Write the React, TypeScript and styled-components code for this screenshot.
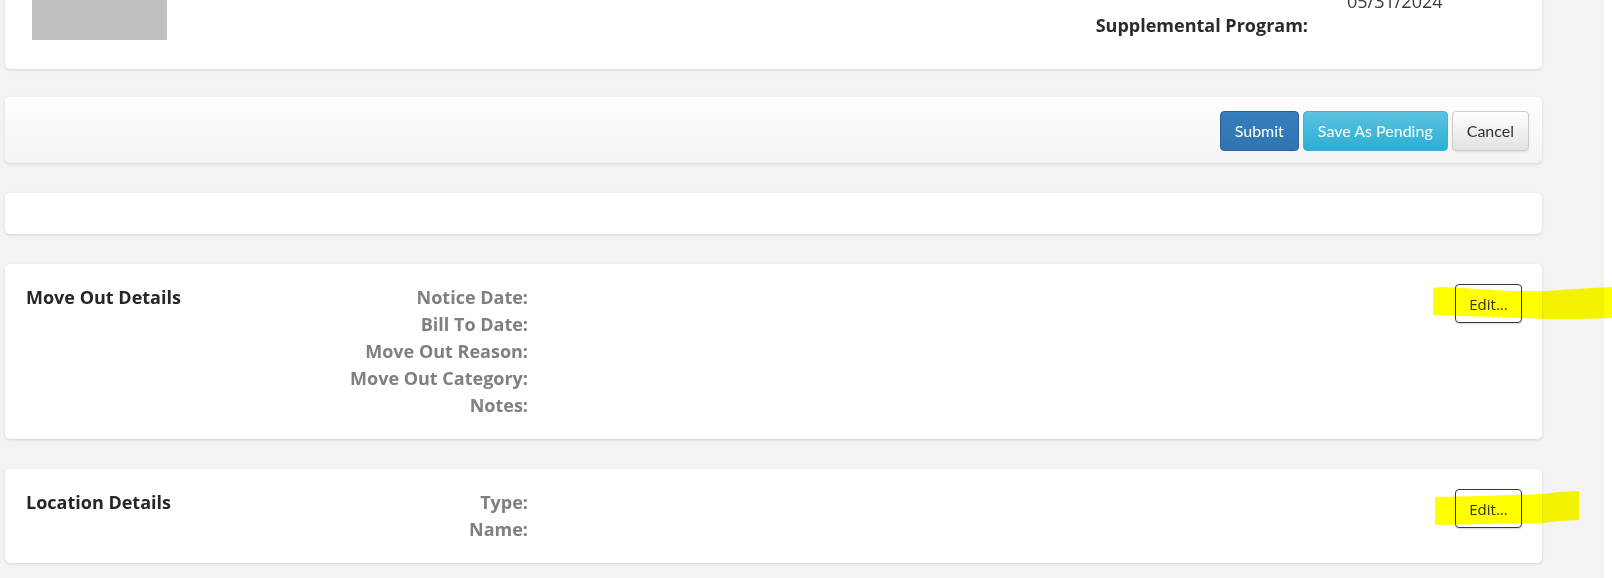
import React from "react";
import styled, { createGlobalStyle } from "styled-components";

const GlobalStyle = createGlobalStyle`
  html, body {
    margin: 0;
    padding: 0;
    background: #f3f3f3;
    overflow: hidden;
  }
  * { box-sizing: border-box; }
`;

const Shell = styled.div`
  position: relative;
  display: flex;
  align-items: flex-start;
  width: 1612px;
  height: 578px;
  overflow: hidden;
  font-family: "Open Sans", "Noto Sans", Arial, sans-serif;
`;

const Main = styled.main`
  flex: 1;
  display: flex;
  flex-direction: column;
  padding: 0 62px 0 5px;
  margin-top: -86px;
`;

const ScrollTrack = styled.div`
  width: 8px;
  height: 578px;
  flex-shrink: 0;
  background: #ffffff;
`;

const Card = styled.section<{ $after?: number }>`
  flex-shrink: 0;
  background: #ffffff;
  border-radius: 5px;
  box-shadow: 0 1px 3px rgba(0, 0, 0, 0.13);
  margin-bottom: ${(p) => (p.$after ?? 30)}px;
`;

const HeaderCard = styled(Card)`
  display: flex;
  align-items: flex-end;
  padding: 16px 0 29px 27px;
`;

const Placeholder = styled.div`
  width: 135px;
  height: 110px;
  background: #bfbfbf;
`;

const InfoGrid = styled.div`
  margin-left: auto;
  margin-right: 75px;
  margin-bottom: 3px;
  display: grid;
  grid-template-columns: 220px 120px;
  column-gap: 39px;
  line-height: 24px;
  font-size: 18px;
`;

const InfoLabel = styled.div`
  text-align: right;
  font-weight: 700;
  color: #2b2b2b;
`;

const InfoValue = styled.div`
  color: #333a44;
`;

const ActionBar = styled(Card)`
  height: 66px;
  display: flex;
  align-items: center;
  justify-content: flex-end;
  gap: 4px;
  padding: 1px 13px 0 0;
  background: linear-gradient(#ffffff, #f4f4f4);
`;

const Button = styled.button<{ $variant: "primary" | "info" | "default" }>`
  height: 40px;
  padding: 0 14px;
  border-radius: 4px;
  font-family: Lato, "Open Sans", sans-serif;
  font-size: 16px;
  cursor: pointer;
  border: 1px solid
    ${(p) =>
      p.$variant === "primary" ? "#2a6295" : p.$variant === "info" ? "#3db1d6" : "#cccccc"};
  color: ${(p) => (p.$variant === "default" ? "#333333" : "#ffffff")};
  background: ${(p) =>
    p.$variant === "primary"
      ? "linear-gradient(#357dbb, #3075b1)"
      : p.$variant === "info"
      ? "linear-gradient(#5bc2e0, #2daed6)"
      : "linear-gradient(#ffffff, #e2e2e2)"};
  box-shadow: ${(p) => (p.$variant === "default" ? "0 1px 2px rgba(0,0,0,0.1)" : "none")};
`;

const EmptyCard = styled(Card)`
  height: 41px;
`;

const DetailCard = styled(Card)`
  display: grid;
  grid-template-columns: 298px 204px 1fr 67px;
  padding: 20px 20px 20px 21px;
  font-size: 18px;
  line-height: 27px;
`;

const SectionTitle = styled.h3`
  margin: 0;
  font-size: 18px;
  font-weight: 700;
  color: #262626;
  line-height: 27px;
`;

const FieldLabels = styled.div`
  display: flex;
  flex-direction: column;
  align-items: flex-end;
  font-weight: 700;
  color: #808080;
  white-space: nowrap;
`;

const EditButton = styled.button`
  width: 67px;
  height: 39px;
  align-self: start;
  background: #ffffff;
  border: 1px solid #2c3b4b;
  border-radius: 4px;
  font-family: "Open Sans", "Noto Sans", sans-serif;
  font-size: 15px;
  color: #333333;
  box-shadow: 0 1px 2px rgba(0, 0, 0, 0.15);
  padding: 0;
  cursor: pointer;
`;

const Highlights = styled.svg`
  position: absolute;
  left: 0;
  top: 0;
  pointer-events: none;
  mix-blend-mode: multiply;
`;

type Section = { title: string; fields: string[] };

const sections: Section[] = [
  {
    title: "Move Out Details",
    fields: ["Notice Date:", "Bill To Date:", "Move Out Reason:", "Move Out Category:", "Notes:"],
  },
  { title: "Location Details", fields: ["Type:", "Name:"] },
];

export default function App() {
  return (
    <>
      <GlobalStyle />
      <Shell>
        <Main>
          <HeaderCard $after={28}>
            <Placeholder />
            <InfoGrid>
              <InfoLabel />
              <InfoValue>05/31/2024</InfoValue>
              <InfoLabel>Supplemental Program:</InfoLabel>
              <InfoValue />
            </InfoGrid>
          </HeaderCard>
          <ActionBar>
            <Button $variant="primary">Submit</Button>
            <Button $variant="info">Save As Pending</Button>
            <Button $variant="default">Cancel</Button>
          </ActionBar>
          <EmptyCard />
          {sections.map((s) => (
            <DetailCard key={s.title}>
              <SectionTitle>{s.title}</SectionTitle>
              <FieldLabels>
                {s.fields.map((f) => (
                  <span key={f}>{f}</span>
                ))}
              </FieldLabels>
              <div />
              <EditButton>Edit...</EditButton>
            </DetailCard>
          ))}
        </Main>
        <ScrollTrack />
        <Highlights width="1612" height="578" viewBox="0 0 1612 578">
          <polygon
            fill="#ffff00"
            points="1433,288 1440,287 1460,288 1510,291 1545,291 1575,289 1612,287 1612,318 1580,319 1545,319 1500,317 1460,316 1433,315"
          />
          <polygon
            fill="#ffff00"
            points="1435,497 1480,496 1543,494 1560,492 1579,491 1579,520 1560,521 1543,523 1480,524 1435,525"
          />
        </Highlights>
      </Shell>
    </>
  );
}
